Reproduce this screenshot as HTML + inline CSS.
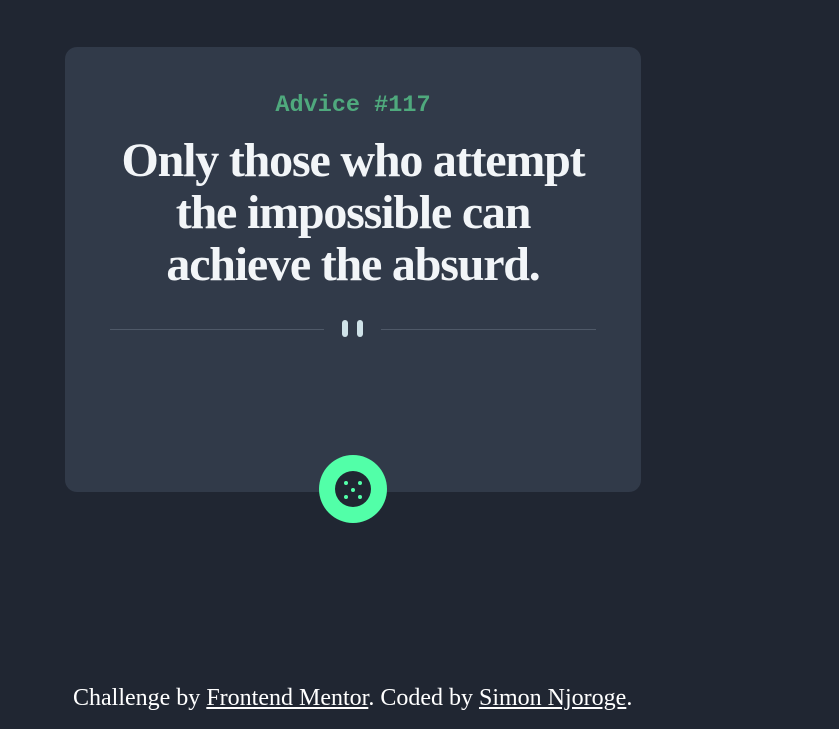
<!DOCTYPE html>
<html><head><style>
html,body{margin:0;padding:0;background:#202632;width:839px;height:729px;overflow:hidden;}
.card{position:absolute;left:65px;top:47px;width:576px;height:445px;background:#313a49;border-radius:12px;}
.adv{position:absolute;left:0;width:576px;top:45px;text-align:center;font:bold 23.5px "Liberation Mono",monospace;color:#4fa97d;}
.q{position:absolute;left:48px;width:480px;top:88px;text-align:center;font:bold 48px/52px "Liberation Serif",serif;letter-spacing:-1.2px;color:#f2f5f8;margin:0;}
.line{position:absolute;top:282px;height:1px;background:#4f5968;}
.bar{position:absolute;top:273px;width:6px;height:17px;border-radius:3px;background:#cfe2e8;}
.btn{position:absolute;left:319px;top:455px;width:68px;height:68px;border-radius:50%;background:#52ffa8;}
.in{position:absolute;left:16px;top:16px;width:36px;height:36px;border-radius:50%;background:#202632;}
.d{position:absolute;width:4px;height:4px;border-radius:50%;background:#52ffa8;}
.foot{position:absolute;left:73px;top:685px;font:24px "Liberation Serif",serif;color:#fff;white-space:nowrap;}
.foot u{text-decoration:underline;}
</style></head><body>
<div class="card">
<div class="adv">Advice #117</div>
<p class="q">Only those who attempt the impossible can achieve the absurd.</p>
<div class="line" style="left:45px;width:214px"></div>
<div class="line" style="left:316px;width:215px"></div>
<div class="bar" style="left:277px"></div>
<div class="bar" style="left:292px"></div>
</div>
<div class="btn"><div class="in">
<div class="d" style="left:9px;top:10px"></div>
<div class="d" style="left:23px;top:10px"></div>
<div class="d" style="left:16px;top:17px"></div>
<div class="d" style="left:9px;top:24px"></div>
<div class="d" style="left:23px;top:24px"></div>
</div></div>
<div class="foot">Challenge by <u>Frontend Mentor</u>. Coded by <u>Simon Njoroge</u>.</div>
</body></html>
